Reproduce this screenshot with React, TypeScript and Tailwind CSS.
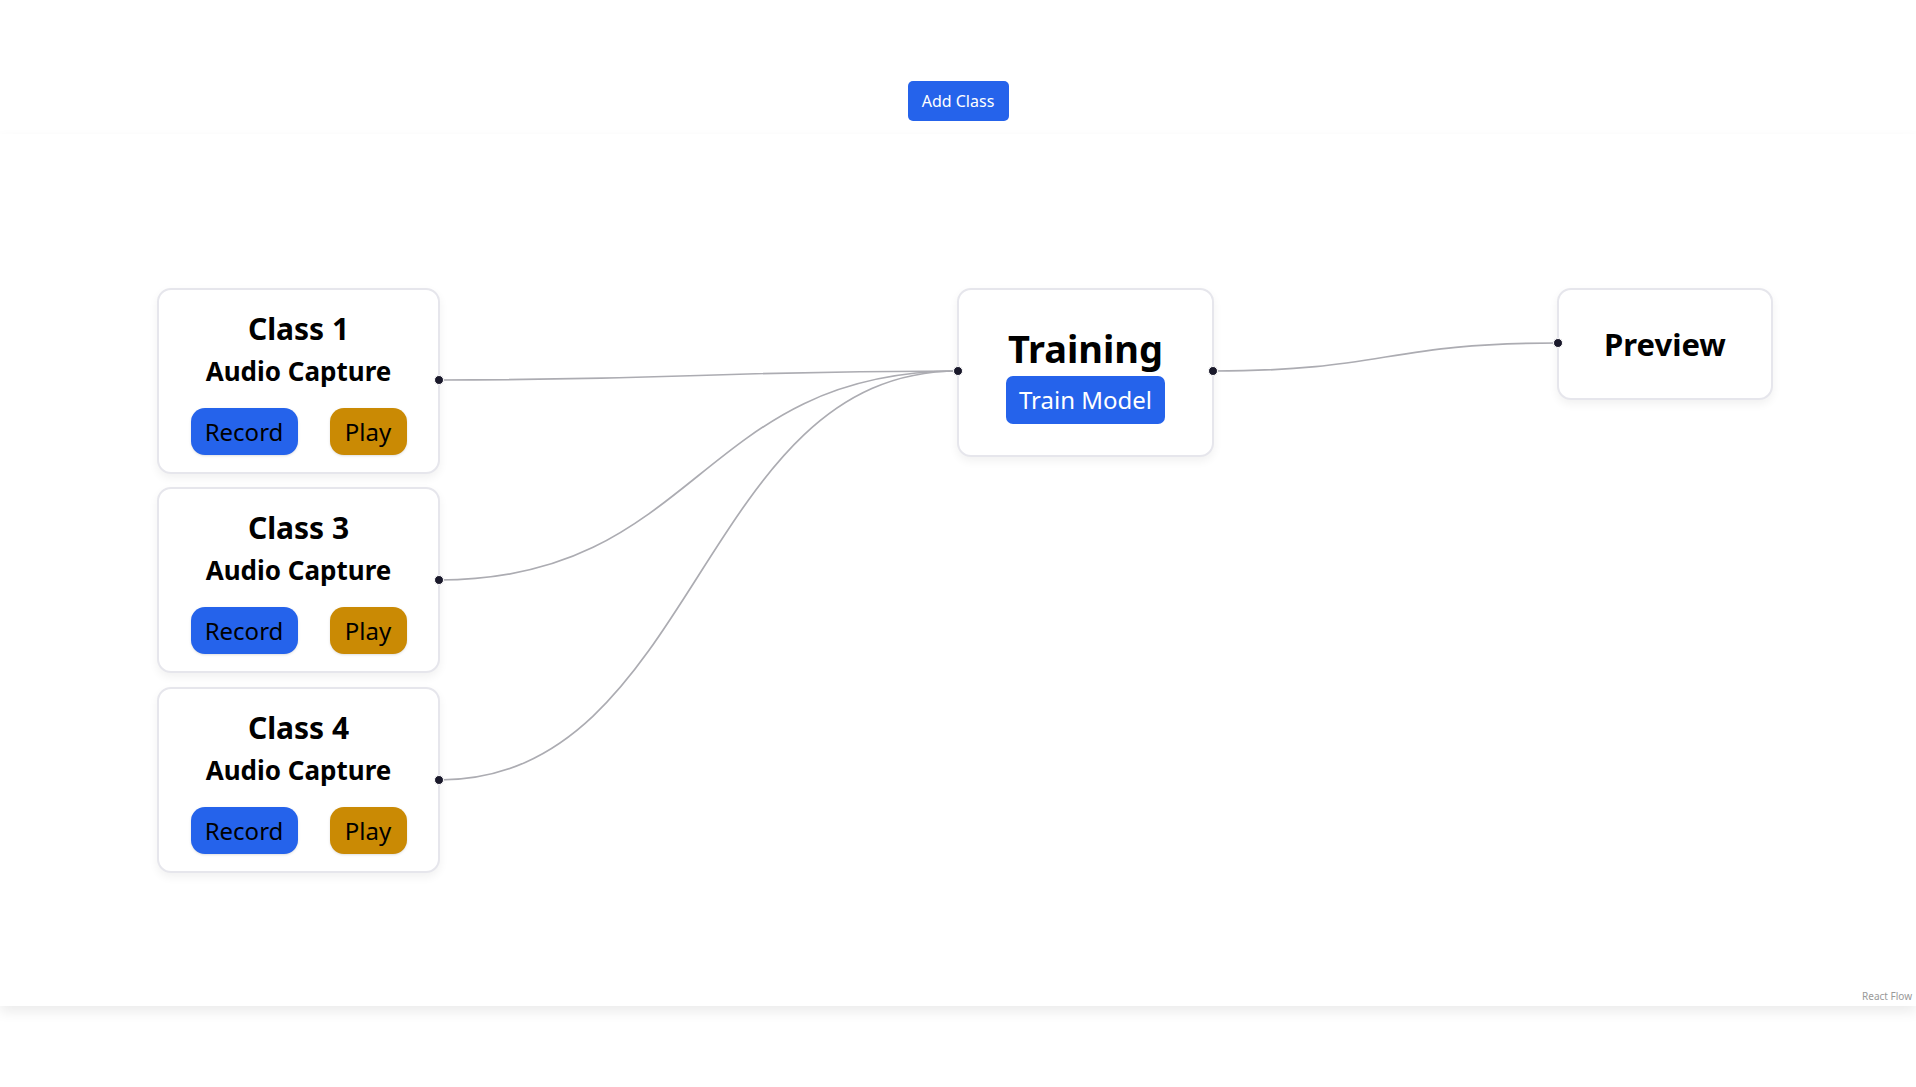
const font = { fontFamily: '"Noto Sans", "Open Sans", sans-serif' }

type Pt = { x: number; y: number }

const bezier = (s: Pt, t: Pt) => {
  const mx = s.x + (t.x - s.x) / 2
  return `M${s.x},${s.y} C${mx},${s.y} ${mx},${t.y} ${t.x},${t.y}`
}

const classNodes = [
  { label: "Class 1", top: 288 },
  { label: "Class 3", top: 487 },
  { label: "Class 4", top: 687 },
]

function Handle({ x, y }: { x: number; y: number }) {
  return (
    <div
      className="absolute w-[10px] h-[10px] rounded-full bg-[#1a192b] border border-white"
      style={{ left: x - 5, top: y - 5 }}
    />
  )
}

function ClassNode({ label, top }: { label: string; top: number }) {
  return (
    <div
      className="absolute left-[157px] w-[283px] h-[186px] rounded-[14px] bg-white border-2 border-[#e6e6ec] shadow-[0_4px_10px_rgba(0,0,0,0.06)] flex flex-col items-center pt-[21px]"
      style={{ top }}
    >
      <div className="text-[30px] leading-[36px] font-bold text-black">{label}</div>
      <div className="mt-[8px] text-[26px] leading-[32px] font-bold text-black">Audio Capture</div>
      <div className="mt-[21px] flex gap-8">
        <button className="w-[107px] h-[47px] rounded-[14px] bg-[#2563eb] text-[24px] text-black shadow-sm">Record</button>
        <button className="w-[77px] h-[47px] rounded-[14px] bg-[#ca8a04] text-[24px] text-black shadow-sm">Play</button>
      </div>
    </div>
  )
}

export default function App() {
  const training = { l: { x: 958, y: 371 }, r: { x: 1213, y: 371 } }
  const preview = { x: 1558, y: 343 }
  const sources = [380, 580, 780].map((y) => ({ x: 439, y }))

  return (
    <div className="w-[1916px] h-[1087px] bg-white overflow-hidden" style={font}>
      <div className="h-[134px] flex justify-center pt-[81px]">
        <button className="w-[101px] h-[40px] rounded-[5px] bg-[#2563eb] text-white text-[16px]">Add Class</button>
      </div>
      <div className="relative h-[872px] bg-white shadow-[0_6px_12px_rgba(0,0,0,0.08)]">
        <div className="absolute inset-0 -top-[134px]">
          <svg className="absolute inset-0" width="1916" height="1006">
            {sources.map((s, i) => (
              <path key={i} d={bezier(s, training.l)} fill="none" stroke="#acacb2" strokeWidth={1.7} />
            ))}
            <path d={bezier(training.r, preview)} fill="none" stroke="#acacb2" strokeWidth={1.7} />
          </svg>

          {classNodes.map((n) => (
            <ClassNode key={n.label} {...n} />
          ))}

          <div className="absolute left-[957px] top-[288px] w-[257px] h-[169px] rounded-[14px] bg-white border-2 border-[#e6e6ec] shadow-[0_4px_10px_rgba(0,0,0,0.06)] flex flex-col items-center pt-[38px]">
            <div className="text-[38px] leading-[40px] font-bold text-black">Training</div>
            <button className="mt-[8px] w-[159px] h-[48px] rounded-[7px] bg-[#2563eb] text-white text-[24px]">Train Model</button>
          </div>

          <div className="absolute left-[1557px] top-[288px] w-[216px] h-[112px] rounded-[14px] bg-white border-2 border-[#e6e6ec] shadow-[0_4px_10px_rgba(0,0,0,0.06)] flex items-center justify-center">
            <div className="text-[31px] leading-[40px] font-bold text-black">Preview</div>
          </div>

          {sources.map((s, i) => (
            <Handle key={i} x={s.x} y={s.y} />
          ))}
          <Handle x={training.l.x} y={training.l.y} />
          <Handle x={training.r.x} y={training.r.y} />
          <Handle x={preview.x} y={preview.y} />
        </div>
        <div className="absolute right-[4px] bottom-[2px] text-[10px] text-[#999]">React Flow</div>
      </div>
    </div>
  )
}
